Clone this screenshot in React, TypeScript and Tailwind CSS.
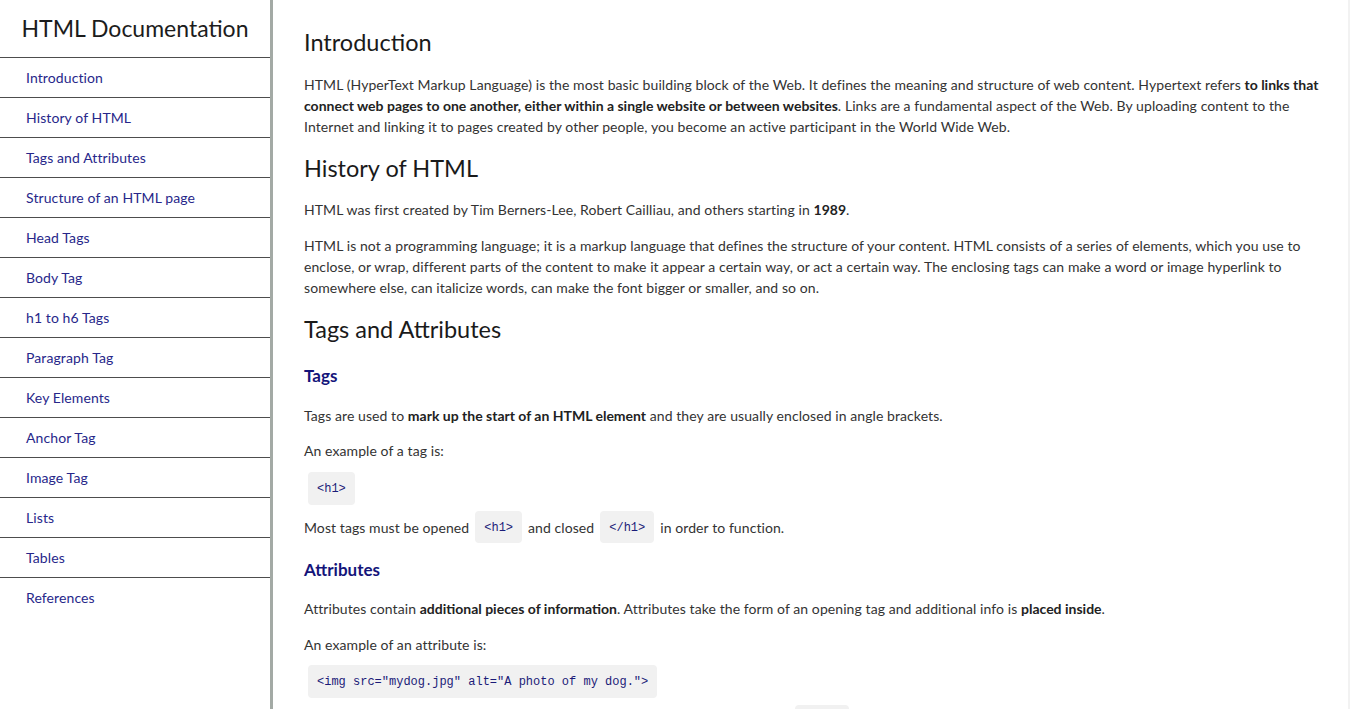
import { FC, ReactNode } from "react";

const navItems = [
  "Introduction",
  "History of HTML",
  "Tags and Attributes",
  "Structure of an HTML page",
  "Head Tags",
  "Body Tag",
  "h1 to h6 Tags",
  "Paragraph Tag",
  "Key Elements",
  "Anchor Tag",
  "Image Tag",
  "Lists",
  "Tables",
  "References",
];

const Code: FC<{ children: ReactNode; block?: boolean }> = ({ children, block }) => (
  <code
    className={
      block
        ? "inline-block ml-[4px] px-[9px] pt-[11px] pb-[9px] leading-[13px] rounded-[4px] bg-[#f1f1f1] text-[12px] tracking-normal text-[#1b1b78] font-['Liberation_Mono',monospace] whitespace-pre"
        : "inline-block mx-[6px] px-[9px] pt-[11px] pb-[9px] leading-[12px] rounded-[4px] bg-[#f1f1f1] text-[12px] tracking-normal text-[#1b1b78] font-['Liberation_Mono',monospace] whitespace-pre"
    }
  >
    {children}
  </code>
);

const Sidebar: FC = () => (
  <nav className="w-[273px] h-screen shrink-0 border-r-[3px] border-[#a3aaa5] bg-white">
    <header className="h-[57px] flex items-center justify-center text-[23px] text-[#1c1c1c]">
      HTML Documentation
    </header>
    <ul>
      {navItems.map((item) => (
        <li
          key={item}
          className="h-[40px] flex items-center pl-[26px] border-t border-[#4d4d4d] text-[14px] tracking-[0.1px] text-[#27278a]"
        >
          <a href="#">{item}</a>
        </li>
      ))}
    </ul>
  </nav>
);

export default function App() {
  return (
    <div className="flex h-screen overflow-hidden bg-white font-['Lato','Noto_Sans',sans-serif]">
      <Sidebar />
      <main className="flex-1 overflow-hidden pl-[31px] pr-[22px] pt-[28px] border-r-2 border-[#f2f2f2] text-[14px] leading-[21px] tracking-[0.08px] text-[#333]">
        <h2 className="text-[23.5px] leading-[29px] tracking-normal text-[#1a1a1a]">Introduction</h2>
        <p className="mt-[17px]">
          HTML (HyperText Markup Language) is the most basic building block of the Web. It defines the meaning and
          structure of web content. Hypertext refers{" "}
          <b className="tracking-normal text-[#222]">
            to links that connect web pages to one another, either within a single website or between websites
          </b>
          . Links are a fundamental aspect of the Web. By uploading content to the Internet and linking it to pages
          created by other people, you become an active participant in the World Wide Web.
        </p>

        <h2 className="mt-[17px] text-[23.5px] leading-[29px] tracking-normal text-[#1a1a1a]">History of HTML</h2>
        <p className="mt-[16px]">
          HTML was first created by Tim Berners-Lee, Robert Cailliau, and others starting in{" "}
          <b className="tracking-normal text-[#222]">1989</b>.
        </p>
        <p className="mt-[15px]">
          HTML is not a programming language; it is a markup language that defines the structure of your content.
          HTML consists of a series of elements, which you use to enclose, or wrap, different parts of the content to
          make it appear a certain way, or act a certain way. The enclosing tags can make a word or image hyperlink to
          somewhere else, can italicize words, can make the font bigger or smaller, and so on.
        </p>

        <h2 className="mt-[17px] text-[23.5px] leading-[29px] tracking-normal text-[#1a1a1a]">Tags and Attributes</h2>
        <h3 className="mt-[21px] text-[17px] leading-[22px] font-bold tracking-normal text-[#14147a]">Tags</h3>
        <p className="mt-[18px]">
          Tags are used to <b className="tracking-normal text-[#222]">mark up the start of an HTML element</b> and
          they are usually enclosed in angle brackets.
        </p>
        <p className="mt-[14px]">An example of a tag is:</p>
        <div className="mt-[11px]">
          <Code block>{"<h1>"}</Code>
        </div>
        <p className="mt-[6px] flex items-center">
          Most tags must be opened <Code>{"<h1>"}</Code> and closed <Code>{"</h1>"}</Code> in order to function.
        </p>

        <h3 className="mt-[16px] text-[17px] leading-[22px] font-bold tracking-normal text-[#14147a]">Attributes</h3>
        <p className="mt-[17px]">
          Attributes contain <b className="tracking-normal text-[#222]">additional pieces of information</b>.
          Attributes take the form of an opening tag and additional info is{" "}
          <b className="tracking-normal text-[#222]">placed inside</b>.
        </p>
        <p className="mt-[15px]">An example of an attribute is:</p>
        <div className="mt-[10px]">
          <Code block>{'<img src="mydog.jpg" alt="A photo of my dog.">'}</Code>
        </div>
        <p className="mt-[7px] flex items-center">
          Here both attributes are the src and alt parts, written inside the opening tag of <Code>{"<img>"}</Code>{" "}
          and separated by spaces.
        </p>
      </main>
    </div>
  );
}
